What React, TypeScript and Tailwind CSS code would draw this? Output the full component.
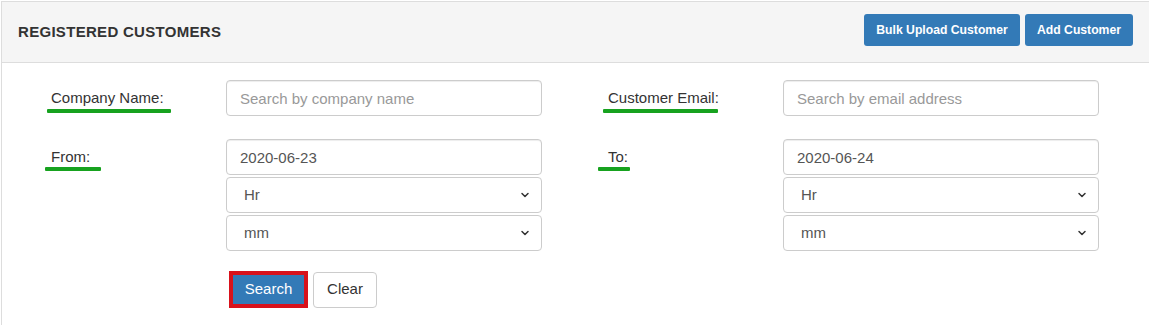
import { ChevronDown } from 'lucide-react'

const font = { fontFamily: '"Liberation Sans", Arial, sans-serif' }

function Label({ text, left, width, top }: { text: string; left: number; width: number; top: number }) {
  return (
    <div className="flex h-[36px] w-[179px] shrink-0 items-center pl-[4px] text-[15px] text-[#333]">
      <span className="relative">
        {text}
        {/* green annotation underline */}
        <span
          className="absolute h-[4px] rounded-[1px] bg-[#17a21f]"
          style={{ left, width, top }}
        />
      </span>
    </div>
  )
}

function TextInput({ value, placeholder }: { value?: string; placeholder?: string }) {
  return (
    <input
      type="text"
      defaultValue={value}
      placeholder={placeholder}
      className="h-[36px] w-[316px] rounded-[4px] border border-[#ccc] bg-white px-[13px] text-[15px] text-[#555] placeholder:text-[#999] shadow-[inset_0_1px_1px_rgba(0,0,0,0.075)] outline-none"
      style={font}
    />
  )
}

function Select({ label }: { label: string }) {
  return (
    <div className="relative mt-[2px] h-[36px] w-[316px]">
      <select
        className="h-full w-full appearance-none rounded-[4px] border border-[#ccc] bg-white pl-[17px] text-[15px] text-[#555] outline-none"
        style={font}
      >
        <option>{label}</option>
      </select>
      <ChevronDown className="pointer-events-none absolute right-[11px] top-[12px] h-[12px] w-[12px] text-[#333]" strokeWidth={3} />
    </div>
  )
}

export default function App() {
  return (
    <div className="h-[325px] w-[1149px] overflow-hidden bg-white pt-px" style={font}>
      <div className="ml-px h-[330px] w-[1160px] border-l border-t border-[#ddd]">
        <div className="flex h-[61px] items-center justify-between border-b border-[#ddd] bg-[#f5f5f5] pl-[16px] pr-[28px]">
          <h3 className="text-[15px] font-bold tracking-[0.3px] text-[#333]">REGISTERED CUSTOMERS</h3>
          <div className="flex gap-[5px] pb-[4px]">
            <button className="h-[32px] w-[156px] rounded-[3px] bg-[#337ab7] text-[12.2px] font-bold text-white">
              Bulk Upload Customer
            </button>
            <button className="h-[32px] w-[108px] rounded-[3px] bg-[#337ab7] text-[12.2px] font-bold text-white">
              Add Customer
            </button>
          </div>
        </div>

        <div className="pl-[45px] pt-[17px]">
          <div className="flex">
            <div className="flex w-[557px]">
              <Label text="Company Name:" left={-4} width={124} top={22} />
              <TextInput placeholder="Search by company name" />
            </div>
            <div className="flex">
              <Label text="Customer Email:" left={-5} width={115} top={22} />
              <TextInput placeholder="Search by email address" />
            </div>
          </div>

          <div className="mt-[23px] flex">
            <div className="flex w-[557px]">
              <Label text="From:" left={-6} width={56} top={21} />
              <div>
                <TextInput value="2020-06-23" />
                <Select label="Hr" />
                <Select label="mm" />
              </div>
            </div>
            <div className="flex">
              <div className="flex h-[36px] w-[179px] shrink-0 items-center pl-[4px] text-[15px] text-[#333]">
                <span className="relative">
                  To:
                  <span className="absolute left-[-10px] top-[21px] h-[4px] w-[32px] rounded-[1px] bg-[#17a21f]" />
                </span>
              </div>
              <div>
                <TextInput value="2020-06-24" />
                <Select label="Hr" />
                <Select label="mm" />
              </div>
            </div>
          </div>

          <div className="ml-[182px] mt-[20px] flex items-center gap-[5px]">
            <div className="border-[4px] border-[#d8121c]">
              <button className="flex h-[29px] w-[71px] items-center justify-center bg-[#337ab7] text-[15px] text-white">
                Search
              </button>
            </div>
            <button className="h-[36px] w-[64px] rounded-[4px] border border-[#ccc] bg-white text-[15px] text-[#333]">
              Clear
            </button>
          </div>
        </div>
      </div>
    </div>
  )
}
